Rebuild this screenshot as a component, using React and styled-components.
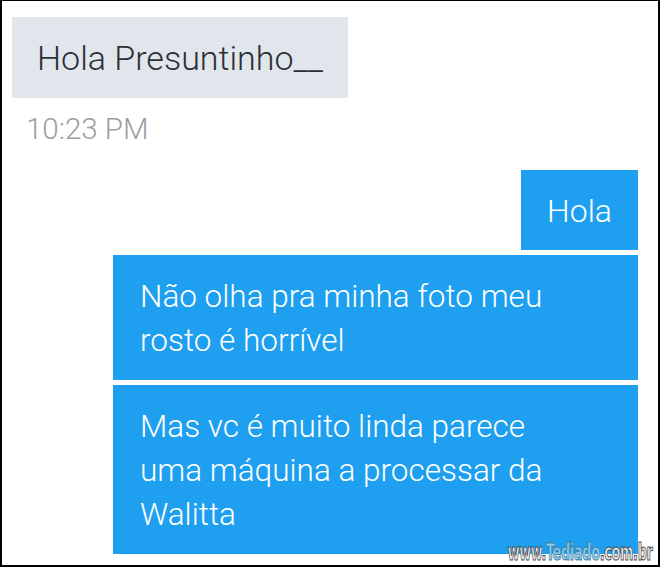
import React from "react";
import styled, { createGlobalStyle } from "styled-components";

const GlobalStyle = createGlobalStyle`
  html, body {
    margin: 0;
    padding: 0;
    background: #ffffff;
  }
  body {
    font-family: Roboto, "Noto Sans", sans-serif;
  }
`;

const Frame = styled.div`
  box-sizing: border-box;
  position: relative;
  width: 660px;
  height: 567px;
  border: 2px solid #000;
  border-top-width: 1px;
  background: #fff;
  overflow: hidden;
  display: flex;
  flex-direction: column;
  padding: 16px 20px 0 10px;
`;

const Incoming = styled.div`
  align-self: flex-start;
  background: #e1e6ec;
  color: #2b3036;
  font-size: 34px;
  font-weight: 300;
  height: 81px;
  box-sizing: border-box;
  padding: 0 25px;
  display: flex;
  align-items: center;
`;

const Time = styled.div`
  color: #9a9ea3;
  font-size: 29.5px;
  font-weight: 300;
  margin: 14px 0 0 14px;
  line-height: 34px;
`;

const Outgoing = styled.div`
  display: flex;
  flex-direction: column;
  align-items: flex-end;
  gap: 5px;
  margin-top: 24px;
`;

const Bubble = styled.div`
  box-sizing: border-box;
  background: #1e9ff0;
  color: #fff;
  font-size: ${(p) => (p.$wide ? "31.5px" : "32px")};
  font-weight: 300;
  line-height: 44px;
  width: ${(p) => (p.$wide ? "525px" : "auto")};
  padding: ${(p) => (p.$wide ? "20px 20px 17px 27px" : "19px 26px 17px")};
`;

const Watermark = styled.div`
  position: absolute;
  right: 5px;
  bottom: 1px;
  line-height: 24px;
  transform: scaleX(0.62);
  transform-origin: right bottom;
  font-family: "DejaVu Sans Condensed", "DejaVu Sans", sans-serif;
  font-weight: bold;
  font-size: 23px;
  letter-spacing: -0.5px;
  color: #ececec;
  -webkit-text-stroke: 1px #4a4a4a;
  span {
    color: #8fd0ee;
    -webkit-text-stroke: 1px #3f7ea0;
  }
`;

export default function App() {
  return (
    <>
      <GlobalStyle />
      <Frame>
        <Incoming>Hola Presuntinho__</Incoming>
        <Time>10:23 PM</Time>
        <Outgoing>
          <Bubble>Hola</Bubble>
          <Bubble $wide>
            Não olha pra minha foto meu
            <br />
            rosto é horrível
          </Bubble>
          <Bubble $wide>
            Mas vc é muito linda parece
            <br />
            uma máquina a processar da
            <br />
            Walitta
          </Bubble>
        </Outgoing>
        <Watermark>
          www.<span>Tediado</span>.com.br
        </Watermark>
      </Frame>
    </>
  );
}
